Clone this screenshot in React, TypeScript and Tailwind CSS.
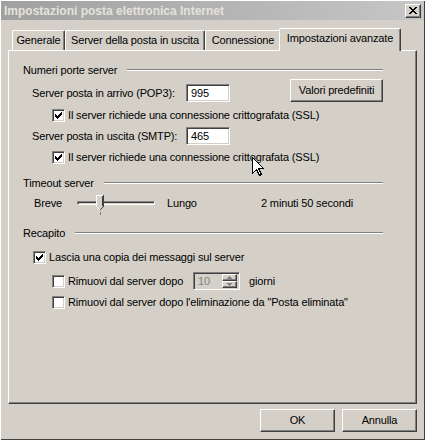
import type { ReactNode } from 'react'

const raised = 'border border-t-white border-l-white border-r-[#404040] border-b-[#404040] shadow-[inset_-1px_-1px_0_#808080]'
const sunken = 'border border-t-[#808080] border-l-[#808080] border-r-white border-b-white shadow-[inset_1px_1px_0_#404040,inset_-1px_-1px_0_#d4d0c8]'

function CheckMark() {
  // classic 7x7 win2k tick, one 1x3 column per pixel
  const tops = [2, 3, 4, 3, 2, 1, 0]
  return (
    <svg width="7" height="7" viewBox="0 0 7 7" shapeRendering="crispEdges">
      {tops.map((t, i) => (
        <rect key={i} x={i} y={t} width="1" height="3" fill="#000" />
      ))}
    </svg>
  )
}

function Checkbox({ checked }: { checked?: boolean }) {
  return (
    <span className={`flex h-[13px] w-[13px] shrink-0 items-center justify-center bg-white ${sunken}`}>
      {checked && <CheckMark />}
    </span>
  )
}

function CheckRow({ checked, children, className }: { checked?: boolean; children: ReactNode; className: string }) {
  return (
    <div className={`flex h-[13px] items-center ${className}`}>
      <Checkbox checked={checked} />
      <span className="ml-[3px] leading-[13px]">{children}</span>
    </div>
  )
}

function GroupHeader({ label, className }: { label: string; className: string }) {
  return (
    <div className={`flex h-[14px] w-[360px] items-center ${className}`}>
      <span className="leading-[14px]">{label}</span>
      <span className="ml-[10px] h-[2px] flex-1 border-t border-b border-t-[#808080] border-b-white" />
    </div>
  )
}

function Edit({ value }: { value: string }) {
  return (
    <div className={`flex h-[18px] w-[44px] items-center bg-white pl-[4px] ${sunken}`}>
      <span className="leading-[13px]">{value}</span>
    </div>
  )
}

function SpinArrow({ up }: { up?: boolean }) {
  return (
    <span className={`flex h-[7px] w-full items-center justify-center bg-[#d4d0c8] ${raised}`}>
      <svg width="5" height="3" viewBox="0 0 5 3" shapeRendering="crispEdges">
        <path d={up ? 'M2 0h1v1h1v1h1v1H0V2h1V1h1z' : 'M0 0h5v1H4v1H3v1H2V2H1V1H0z'} fill="#808080" />
      </svg>
    </span>
  )
}

function PushButton({ label, className }: { label: string; className: string }) {
  return (
    <div className={`flex items-center justify-center bg-[#d4d0c8] ${raised} ${className}`}>
      <span className="leading-[13px]">{label}</span>
    </div>
  )
}

export default function App() {
  const tab = 'flex h-[20px] items-center justify-center rounded-t-[2px] border-t border-l border-r border-t-white border-l-white border-r-[#404040] shadow-[inset_-1px_0_0_#808080]'

  return (
    <div
      className="relative h-[440px] w-[425px] overflow-hidden bg-[#d4d0c8] text-[11px] tracking-[-0.15px] text-black shadow-[inset_1px_1px_0_#fff,inset_-1px_-1px_0_#404040]"
      style={{ fontFamily: '"Liberation Sans", Arial, sans-serif' }}
    >
      {/* title bar (inactive window) */}
      <div className="mx-[1px] mt-[1px] flex h-[19px] items-center bg-gradient-to-r from-[#a0a0a0] to-[#c6c6c6] pl-[3px] pr-[3px]">
        <span className="flex-1 text-[12px] font-bold leading-[14px] tracking-normal text-[#e4e2dc]">
          Impostazioni posta elettronica Internet
        </span>
        <div className={`flex h-[14px] w-[16px] items-center justify-center bg-[#d4d0c8] ${raised}`}>
          <svg width="8" height="7" viewBox="0 0 8 7" shapeRendering="crispEdges">
            <path d="M0 0h2v1h1v1h2V1h1V0h2v1H7v1H6v1H5v1h1v1h1v1h1v1H6V6H5V5H3v1H2v1H0V6h1V5h1V4h1V3H2V2H1V1H0z" fill="#000" />
          </svg>
        </div>
      </div>

      {/* tabs */}
      <div className="mt-[8px] flex h-[22px] items-end pl-[12px]">
        <div className={`${tab} w-[53px]`}>Generale</div>
        <div className={`${tab} w-[140px]`}>Server della posta in uscita</div>
        <div className={`${tab} w-[76px]`}>Connessione</div>
        <div className={`${tab} relative z-10 -mb-px -ml-[2px] h-[23px] w-[122px] bg-[#d4d0c8] pb-[3px]`}>
          Impostazioni avanzate
        </div>
      </div>

      {/* page */}
      <div className="ml-[8px] flex h-[354px] w-[409px] flex-col border border-t-white border-l-white border-r-[#404040] border-b-[#404040] pl-[14px] pt-[12px] shadow-[inset_-1px_-1px_0_#808080]">
        <GroupHeader label="Numeri porte server" className="" />

        <div className="mt-[2px] flex h-[23px] w-[360px] items-start">
          <div className="ml-[9px] mt-[5px] flex items-center">
            <span className="w-[154px] leading-[13px]">Server posta in arrivo (POP3):</span>
            <Edit value="995" />
          </div>
          <PushButton label="Valori predefiniti" className="ml-auto h-[23px] w-[93px]" />
        </div>
        <CheckRow checked className="ml-[29px] mt-[7px]">
          Il server richiede una connessione crittografata (SSL)
        </CheckRow>

        <div className="ml-[9px] mt-[5px] flex items-center">
          <span className="w-[154px] leading-[13px]">Server posta in uscita (SMTP):</span>
          <Edit value="465" />
        </div>
        <CheckRow checked className="ml-[29px] mt-[6px]">
          Il server richiede una connessione crittografata (SSL)
        </CheckRow>

        <GroupHeader label="Timeout server" className="mt-[12px]" />
        <div className="ml-[11px] mt-[5px] flex h-[16px] items-center">
          <span className="w-[43px] leading-[13px]">Breve</span>
          <div className="relative h-[16px] w-[78px]">
            <span className={`absolute left-0 top-[6px] h-[4px] w-[78px] ${sunken}`} />
            <svg className="absolute left-[19px] top-0" width="8" height="16" viewBox="0 0 8 16" shapeRendering="crispEdges">
              <path d="M0 0h8v11l-4 5-4-5z" fill="#d4d0c8" />
              <path d="M0 0h7v1H1v10H0z" fill="#fff" />
              <path d="M7 0h1v11H7z M6 1h1v10H6z" fill="#404040" />
              <path d="M4 15l3-4h1l-4 5z" fill="#404040" />
              <path d="M0 11h1l3 4h-1z" fill="#fff" />
            </svg>
            <span className="absolute left-[23px] top-[17px] h-[3px] w-px bg-[#808080]" />
          </div>
          <span className="ml-[12px] w-[94px] leading-[13px]">Lungo</span>
          <span className="leading-[13px]">2 minuti 50 secondi</span>
        </div>

        <GroupHeader label="Recapito" className="mt-[15px]" />
        <CheckRow checked className="ml-[10px] mt-[11px]">
          Lascia una copia dei messaggi sul server
        </CheckRow>
        <div className="ml-[29px] mt-[8px] flex h-[18px] items-center">
          <Checkbox />
          <span className="ml-[3px] w-[125px] leading-[13px]">Rimuovi dal server dopo</span>
          <div className={`flex h-[18px] w-[47px] items-center bg-[#d4d0c8] pl-[4px] pr-[2px] ${sunken}`}>
            <span className="flex-1 leading-[13px] text-[#808080]">10</span>
            <div className="flex w-[15px] flex-col">
              <SpinArrow up />
              <SpinArrow />
            </div>
          </div>
          <span className="ml-[9px] leading-[13px]">giorni</span>
        </div>
        <CheckRow className="ml-[29px] mt-[6px]">
          Rimuovi dal server dopo l'eliminazione da "Posta eliminata"
        </CheckRow>
      </div>

      {/* dialog buttons */}
      <div className="mr-[8px] mt-[5px] flex justify-end gap-[7px]">
        <PushButton label="OK" className="h-[23px] w-[75px]" />
        <PushButton label="Annulla" className="h-[23px] w-[75px]" />
      </div>

      {/* mouse pointer */}
      <svg className="absolute left-[252px] top-[157px]" width="12" height="19" viewBox="0 0 12 19" shapeRendering="crispEdges">
        <path d="M0.5 0.5V16.5L4.5 12.5L7.5 18.5L9.5 17.5L6.5 11.5H11.5Z" fill="#fff" stroke="#000" strokeWidth="1" />
      </svg>
    </div>
  )
}
